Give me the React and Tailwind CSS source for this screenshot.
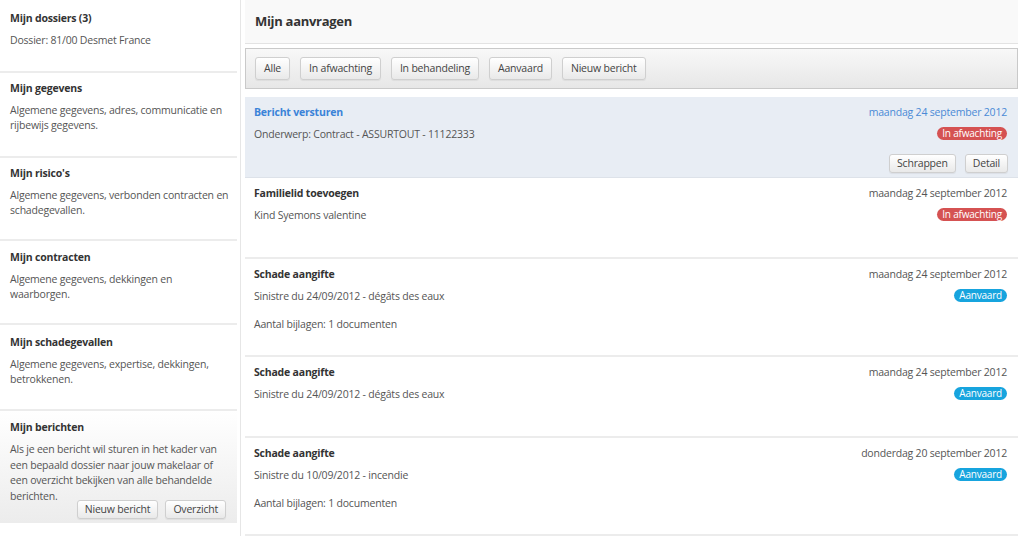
const font = { fontFamily: '"Open Sans", "Noto Sans", sans-serif' };

const sections = [
  { title: 'Mijn dossiers (3)', text: 'Dossier: 81/00 Desmet France', h: 'h-[73px]', pt: 'pt-[11px]' },
  { title: 'Mijn gegevens', text: 'Algemene gegevens, adres, communicatie en rijbewijs gegevens.', h: 'h-[85px]', pt: 'pt-[8px]' },
  { title: "Mijn risico's", text: 'Algemene gegevens, verbonden contracten en schadegevallen.', h: 'h-[83px]', pt: 'pt-[8px]' },
  { title: 'Mijn contracten', text: 'Algemene gegevens, dekkingen en waarborgen.', h: 'h-[84px]', pt: 'pt-[9px]' },
  { title: 'Mijn schadegevallen', text: 'Algemene gegevens, expertise, dekkingen, betrokkenen.', h: 'h-[86px]', pt: 'pt-[10px]' },
];

const rows = [
  { title: 'Familielid toevoegen', text: 'Kind Syemons valentine', date: 'maandag 24 september 2012', status: 'wait' },
  { title: 'Schade aangifte', text: 'Sinistre du 24/09/2012 - dégâts des eaux', extra: 'Aantal bijlagen: 1 documenten', date: 'maandag 24 september 2012', status: 'ok' },
  { title: 'Schade aangifte', text: 'Sinistre du 24/09/2012 - dégâts des eaux', date: 'maandag 24 september 2012', status: 'ok' },
  { title: 'Schade aangifte', text: 'Sinistre du 10/09/2012 - incendie', extra: 'Aantal bijlagen: 1 documenten', date: 'donderdag 20 september 2012', status: 'ok' },
];

function Btn({ children, className = '' }) {
  return (
    <button className={'border border-[#cfcfcf] rounded-[3px] bg-gradient-to-b from-white to-[#e9e9e9] text-[10.5px] text-[#444] leading-none shadow-[0_1px_1px_rgba(0,0,0,0.06)] ' + className}>
      {children}
    </button>
  );
}

function Badge({ status }) {
  if (status === 'wait') {
    return <span className="inline-block h-[13px] px-[5px] rounded-full bg-[#d55252] text-white text-[10px] leading-[13px]">In afwachting</span>;
  }
  return <span className="inline-block h-[13px] px-[5px] rounded-full bg-[#17a4de] text-white text-[10px] leading-[13px]">Aanvaard</span>;
}

function Row({ row }) {
  return (
    <div className={'flex justify-between pl-[9px] pr-[11px] pt-[8px] border-b-2 border-[#ececec] ' + (row.extra ? 'h-[98px]' : 'h-[81px]')}>
      <div className="flex flex-col text-[10.5px] leading-[14px]">
        <div className="font-bold text-[#333]">{row.title}</div>
        <div className="mt-[8px] text-[#555]">{row.text}</div>
        {row.extra && <div className="mt-[14px] text-[#555]">{row.extra}</div>}
      </div>
      <div className="flex flex-col items-end text-[10.5px] leading-[14px]">
        <div className="text-[#555]">{row.date}</div>
        <div className="mt-[8px] flex"><Badge status={row.status} /></div>
      </div>
    </div>
  );
}

export default function App() {
  return (
    <div className="flex h-[536px] w-[1023px] bg-white overflow-hidden tracking-[-0.2px]" style={font}>
      <aside className="w-[241px] shrink-0 border-r border-[#e6e6e6]">
        <div className="w-[237px]">
          {sections.map((s) => (
            <div key={s.title} className={'border-b-2 border-[#ececec] pl-[10px] pr-[4px] ' + s.h + ' ' + s.pt}>
              <div className="text-[10.5px] leading-[14px] font-bold text-[#333]">{s.title}</div>
              <div className="mt-[8px] text-[10.5px] leading-[14.5px] text-[#555]">{s.text}</div>
            </div>
          ))}
          <div className="h-[112px] px-[10px] pt-[9px] bg-gradient-to-b from-white to-[#ececec]">
            <div className="text-[10.5px] leading-[14px] font-bold text-[#333]">Mijn berichten</div>
            <div className="mt-[8px] text-[10.5px] leading-[15.7px] text-[#555]">
              Als je een bericht wil sturen in het kader van een bepaald dossier naar jouw makelaar of een overzicht bekijken van alle behandelde berichten.
            </div>
            <div className="flex justify-end gap-[7px] -mt-[5px] pr-[1px]">
              <Btn className="h-[19px] px-[7px]">Nieuw bericht</Btn>
              <Btn className="h-[19px] px-[7px]">Overzicht</Btn>
            </div>
          </div>
        </div>
      </aside>

      <main className="flex-1 flex flex-col pl-[4px] pr-[5px]">
        <div className="h-[44px] shrink-0 bg-[#f9f9f9] border-b border-[#e3e3e3] flex items-center pl-[10px]">
          <h1 className="text-[13px] font-bold text-[#333] tracking-[-0.3px]">Mijn aanvragen</h1>
        </div>
        <div className="mt-[4px] h-[41px] shrink-0 border border-[#c9c9c9] bg-gradient-to-b from-[#f8f8f8] to-[#e7e7e7] flex items-center gap-[10px] pl-[9px]">
          <Btn className="h-[23px] px-[8px]">Alle</Btn>
          <Btn className="h-[23px] px-[8px]">In afwachting</Btn>
          <Btn className="h-[23px] px-[8px]">In behandeling</Btn>
          <Btn className="h-[23px] px-[8px]">Aanvaard</Btn>
          <Btn className="h-[23px] px-[8px]">Nieuw bericht</Btn>
        </div>

        <div className="mt-[8px] h-[81px] shrink-0 bg-[#e8edf4] border-b border-[#dde2e9] flex justify-between pl-[9px] pr-[10px] pt-[8px]">
          <div className="flex flex-col text-[10.5px] leading-[14px]">
            <div className="font-bold text-[#3a83d8]">Bericht versturen</div>
            <div className="mt-[8px] text-[#555]">Onderwerp: Contract - ASSURTOUT - 11122333</div>
          </div>
          <div className="flex flex-col items-end text-[10.5px] leading-[14px]">
            <div className="text-[#4a8ad6] pr-[1px]">maandag 24 september 2012</div>
            <div className="mt-[8px] flex pr-[1px]"><Badge status="wait" /></div>
            <div className="mt-[14px] flex gap-[9px]">
              <Btn className="h-[19px] px-[7px]">Schrappen</Btn>
              <Btn className="h-[19px] px-[7px]">Detail</Btn>
            </div>
          </div>
        </div>

        {rows.map((r, i) => (
          <Row key={i} row={r} />
        ))}
      </main>
    </div>
  );
}
